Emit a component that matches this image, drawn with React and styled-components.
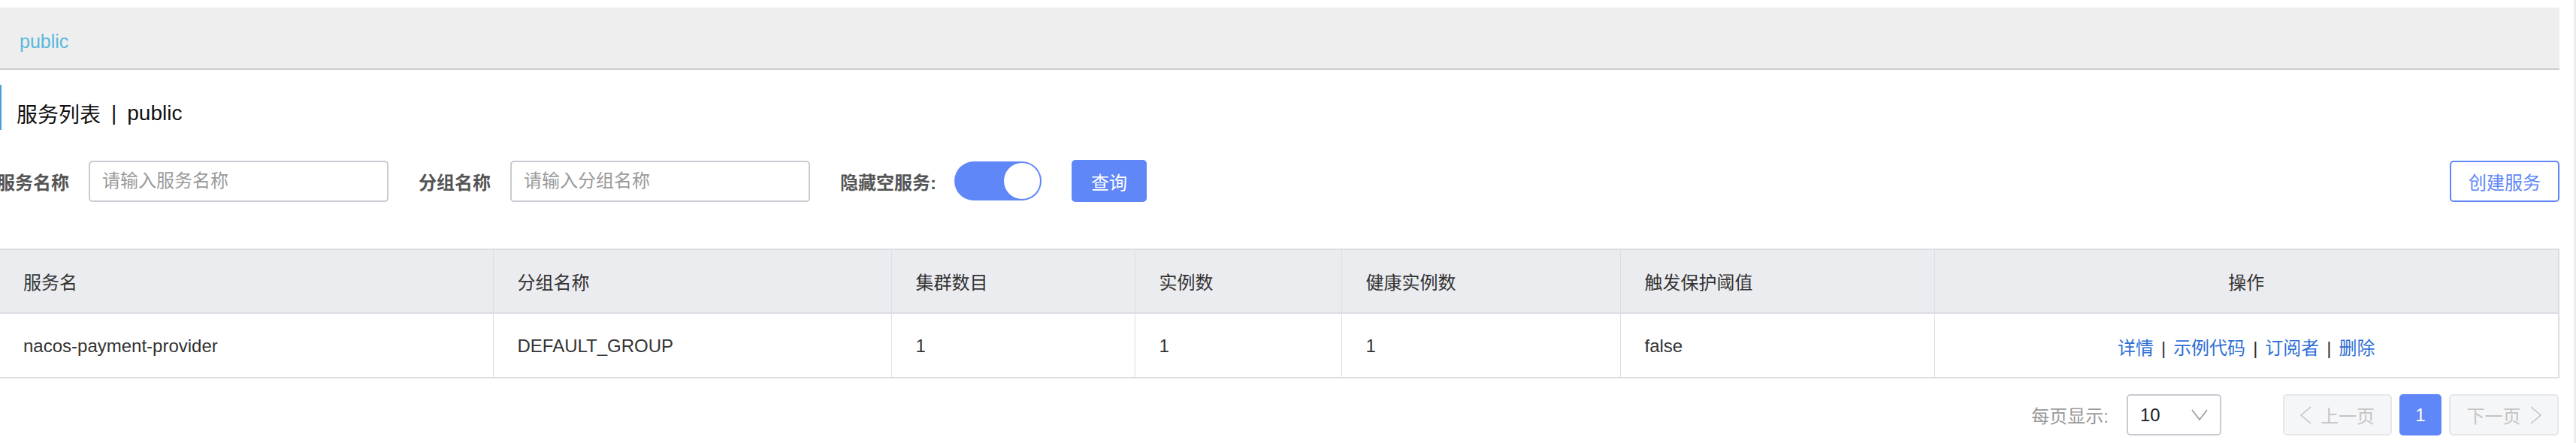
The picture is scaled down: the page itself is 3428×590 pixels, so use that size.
import React from 'react';
import styled, { createGlobalStyle } from 'styled-components';

const GlobalStyle = createGlobalStyle`
  html, body {
    margin: 0;
    padding: 0;
    background: #fff;
  }
  body {
    font-family: "Liberation Sans", "Noto Sans CJK SC", sans-serif;
    color: #333;
  }
`;

const BLUE = '#6087f7';

const Screen = styled.div`
  display: flex;
  width: 3428px;
  height: 590px;
  overflow: hidden;
  background: #fff;
`;

const Main = styled.div`
  width: 3406px;
  flex-shrink: 0;
  padding-top: 10px;
`;

const Gutter = styled.div`
  flex: 1;
  border-right: 3px solid #ececec;
`;

const NamespaceBar = styled.div`
  height: 83px;
  background: #eeeeee;
  border-bottom: 2px solid #cccccc;
  display: flex;
  align-items: center;
  padding: 10px 0 0 26px;
  box-sizing: border-box;
  font-size: 25px;
  color: #56b9dd;
`;

const Title = styled.div`
  margin-top: 20px;
  height: 60px;
  box-sizing: border-box;
  border-left: 2px solid #4a9fd8;
  padding: 16px 0 0 20px;
  display: flex;
  align-items: center;
  font-size: 28px;
  color: #111;
`;

const TitleSep = styled.span`
  margin: 0 14px;
`;

const FilterRow = styled.div`
  margin: 40px 0 0 -4px;
  height: 56px;
  display: flex;
  align-items: center;
`;

const Label = styled.span`
  font-size: 24px;
  font-weight: 700;
  color: #555;
  margin-right: ${p => p.$gap || 26}px;
  white-space: nowrap;
`;

const Input = styled.input`
  width: 399px;
  height: 55px;
  box-sizing: border-box;
  border: 2px solid #c9cbd2;
  border-radius: 5px;
  padding: 0 0 0 16px;
  margin-right: 40px;
  font-family: inherit;
  font-size: 24px;
  outline: none;
  &::placeholder {
    color: #9a9a9a;
  }
`;

const Switch = styled.div`
  width: 116px;
  height: 52px;
  border-radius: 26px;
  background: ${BLUE};
  display: flex;
  align-items: center;
  justify-content: ${p => (p.$on ? 'flex-end' : 'flex-start')};
  padding: 0 2px;
  box-sizing: border-box;
  margin-right: 40px;
`;

const Knob = styled.div`
  width: 48px;
  height: 48px;
  border-radius: 50%;
  background: #fff;
`;

const Button = styled.button`
  height: ${p => (p.$outline ? 55 : 56)}px;
  width: ${p => p.$w}px;
  box-sizing: border-box;
  border-radius: 5px;
  border: 2px solid ${BLUE};
  background: ${p => (p.$outline ? '#fff' : BLUE)};
  color: ${p => (p.$outline ? BLUE : '#fff')};
  font-family: inherit;
  font-size: 24px;
  padding: 0;
  cursor: pointer;
`;

const Spacer = styled.div`
  flex: 1;
`;

const Table = styled.table`
  margin-top: 62px;
  width: 3405px;
  table-layout: fixed;
  border-collapse: collapse;
  font-size: 24px;
  color: #333;
`;

const Th = styled.th`
  height: 83px;
  padding: 0 0 0 ${p => (p.$first ? 31 : 32)}px;
  background: #ebecf0;
  font-weight: 400;
  text-align: ${p => (p.$center ? 'center' : 'left')};
  border-top: 2px solid #dcdee3;
  border-bottom: 2px solid #dcdee3;
  border-left: ${p => (p.$first ? 'none' : '1px solid #dcdee3')};
  border-right: ${p => (p.$last ? '2px solid #dcdee3' : 'none')};
  ${p => p.$center && 'padding: 0;'}
`;

const Td = styled.td`
  height: 82px;
  padding: 2px 0 0 ${p => (p.$first ? 31 : 32)}px;
  text-align: ${p => (p.$center ? 'center' : 'left')};
  border-bottom: 2px solid #dcdee3;
  border-left: ${p => (p.$first ? 'none' : '1px solid #dcdee3')};
  border-right: ${p => (p.$last ? '2px solid #dcdee3' : 'none')};
  ${p => p.$center && 'padding: 2px 0 0 0;'}
`;

const ActionLink = styled.a`
  color: #2f6fd6;
  text-decoration: none;
  cursor: pointer;
`;

const ActionSep = styled.span`
  color: #333;
  margin: 0 10px;
`;

const Pager = styled.div`
  margin-top: 21px;
  width: 3405px;
  height: 55px;
  display: flex;
  align-items: center;
  justify-content: flex-end;
`;

const PagerLabel = styled.span`
  font-size: 24px;
  color: #999;
  margin-right: 24px;
`;

const Select = styled.div`
  width: 126px;
  height: 55px;
  box-sizing: border-box;
  border: 2px solid #c9cbd2;
  border-radius: 5px;
  display: flex;
  align-items: center;
  padding: 0 16px 0 16px;
  font-size: 24px;
  color: #222;
  margin-right: 82px;
  justify-content: space-between;
`;

const PageBtn = styled.div`
  height: 55px;
  width: ${p => p.$w}px;
  box-sizing: border-box;
  border-radius: 5px;
  border: 2px solid ${p => (p.$active ? BLUE : '#e6e7eb')};
  background: ${p => (p.$active ? BLUE : '#f5f6f8')};
  color: ${p => (p.$active ? '#fff' : '#c4c4c4')};
  font-size: 24px;
  display: flex;
  align-items: center;
  justify-content: center;
  gap: 12px;
  margin-left: ${p => p.$ml || 0}px;
`;

const Chevron = ({ dir, color = '#c4c4c4', w = 15, h = 24 }) => {
  const pts =
    dir === 'left'
      ? `${w - 1},1 1,${h / 2} ${w - 1},${h - 1}`
      : dir === 'right'
      ? `1,1 ${w - 1},${h / 2} 1,${h - 1}`
      : `1,1 ${w / 2},${h - 1} ${w - 1},1`;
  return (
    <svg width={w} height={h} viewBox={`0 0 ${w} ${h}`}>
      <polyline points={pts} fill="none" stroke={color} strokeWidth="1.6" />
    </svg>
  );
};

const columns = [
  { title: '服务名', w: 656 },
  { title: '分组名称', w: 530 },
  { title: '集群数目', w: 324 },
  { title: '实例数', w: 275 },
  { title: '健康实例数', w: 371 },
  { title: '触发保护阈值', w: 418 },
  { title: '操作', w: 831, center: true },
];

const rows = [
  ['nacos-payment-provider', 'DEFAULT_GROUP', '1', '1', '1', 'false'],
];

const actions = ['详情', '示例代码', '订阅者', '删除'];

export default function App() {
  return (
    <>
      <GlobalStyle />
      <Screen>
        <Main>
          <NamespaceBar>public</NamespaceBar>
          <Title>
            服务列表<TitleSep>|</TitleSep>public
          </Title>
          <FilterRow>
            <Label>服务名称</Label>
            <Input placeholder="请输入服务名称" />
            <Label>分组名称</Label>
            <Input placeholder="请输入分组名称" />
            <Label $gap={24}>隐藏空服务:</Label>
            <Switch $on>
              <Knob />
            </Switch>
            <Button $w={100}>查询</Button>
            <Spacer />
            <Button $outline $w={146}>创建服务</Button>
          </FilterRow>
          <Table>
            <colgroup>
              {columns.map(c => (
                <col key={c.title} style={{ width: c.w }} />
              ))}
            </colgroup>
            <thead>
              <tr>
                {columns.map((c, i) => (
                  <Th
                    key={c.title}
                    $first={i === 0}
                    $last={i === columns.length - 1}
                    $center={c.center}
                  >
                    {c.title}
                  </Th>
                ))}
              </tr>
            </thead>
            <tbody>
              {rows.map(r => (
                <tr key={r[0]}>
                  {r.map((v, i) => (
                    <Td key={i} $first={i === 0}>
                      {v}
                    </Td>
                  ))}
                  <Td $center $last>
                    {actions.map((a, i) => (
                      <React.Fragment key={a}>
                        {i > 0 && <ActionSep>|</ActionSep>}
                        <ActionLink>{a}</ActionLink>
                      </React.Fragment>
                    ))}
                  </Td>
                </tr>
              ))}
            </tbody>
          </Table>
          <Pager>
            <PagerLabel>每页显示:</PagerLabel>
            <Select>
              <span>10</span>
              <Chevron dir="down" color="#999" w={22} h={15} />
            </Select>
            <PageBtn $w={145}>
              <Chevron dir="left" />
              上一页
            </PageBtn>
            <PageBtn $w={56} $active $ml={10}>
              1
            </PageBtn>
            <PageBtn $w={146} $ml={10}>
              下一页
              <Chevron dir="right" />
            </PageBtn>
          </Pager>
        </Main>
        <Gutter />
      </Screen>
    </>
  );
}
